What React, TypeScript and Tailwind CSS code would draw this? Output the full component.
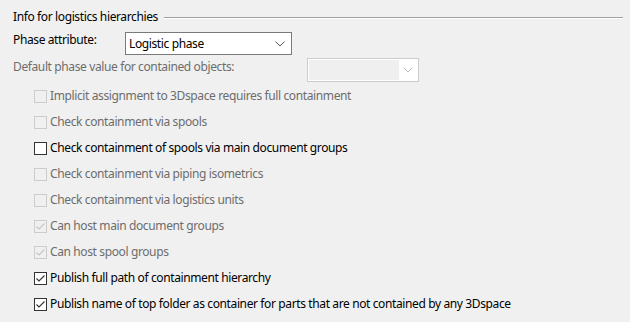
import React from 'react';

interface Option {
  label: string;
  checked: boolean;
  disabled: boolean;
}

const OPTIONS: Option[] = [
  { label: 'Implicit assignment to 3Dspace requires full containment', checked: false, disabled: true },
  { label: 'Check containment via spools', checked: false, disabled: true },
  { label: 'Check containment of spools via main document groups', checked: false, disabled: false },
  { label: 'Check containment via piping isometrics', checked: false, disabled: true },
  { label: 'Check containment via logistics units', checked: false, disabled: true },
  { label: 'Can host main document groups', checked: true, disabled: true },
  { label: 'Can host spool groups', checked: true, disabled: true },
  { label: 'Publish full path of containment hierarchy', checked: true, disabled: false },
  { label: 'Publish name of top folder as container for parts that are not contained by any 3Dspace', checked: true, disabled: false },
];

function Chevron({ color }: { color: string }) {
  return (
    <svg width="10" height="6" viewBox="0 0 10 6" fill="none">
      <path d="M0.5 0.5 L5 5 L9.5 0.5" stroke={color} strokeWidth="1" />
    </svg>
  );
}

function CheckRow({ option }: { option: Option }) {
  const { label, checked, disabled } = option;
  return (
    <div className="flex items-center h-[26px] pl-[34px]">
      <div
        className={`w-[13px] h-[13px] border flex items-center justify-center shrink-0 ${
          disabled ? 'border-[#cccccc] bg-[#f0f0f0]' : 'border-[#333333] bg-white'
        }`}
      >
        {checked && (
          <svg width="11" height="11" viewBox="0 0 11 11" fill="none">
            <path d="M1.5 5.5 L4 8 L9.5 2.5" stroke={disabled ? '#c6c6c6' : '#333333'} strokeWidth="1.1" />
          </svg>
        )}
      </div>
      <span className={`ml-[3px] leading-[16px] whitespace-nowrap ${disabled ? 'text-[#6d6d6d]' : 'text-black'}`}>
        {label}
      </span>
    </div>
  );
}

export default function App() {
  return (
    <div className="w-[630px] h-[322px] bg-[#f0f0f0] font-['Noto_Sans',sans-serif] text-[12px] tracking-[-0.38px] pt-[8px] overflow-hidden">
      {/* Group header */}
      <div className="flex items-center h-[18px] pl-[13px] pr-[7px]">
        <span className="leading-[16px] whitespace-nowrap">Info for logistics hierarchies</span>
        <div className="flex-1 ml-[6px] mt-[2px] border-t border-t-[#a0a0a0] border-b border-b-white" />
      </div>

      {/* Phase attribute */}
      <div className="flex items-start mt-[6px] pl-[13px]">
        <span className="w-[112px] leading-[16px]">Phase attribute:</span>
        <div className="w-[167px] h-[23px] border border-[#7a7a7a] bg-white flex items-center justify-between pl-[3px] pr-[6px]">
          <span className="leading-[16px]">Logistic phase</span>
          <Chevron color="#555555" />
        </div>
      </div>

      {/* Default phase value */}
      <div className="flex items-start mt-[3px] pl-[13px]">
        <span className="w-[294px] mt-[1px] leading-[16px] text-[#6d6d6d]">Default phase value for contained objects:</span>
        <div className="w-[112px] h-[24px] border border-[#cccccc] bg-white flex p-[1px]">
          <div className="flex-1 bg-[#efefef]" />
          <div className="w-[18px] flex items-center justify-center">
            <Chevron color="#bfbfbf" />
          </div>
        </div>
      </div>

      {/* Options */}
      <div className="flex flex-col mt-[1px]">
        {OPTIONS.map(opt => (
          <CheckRow key={opt.label} option={opt} />
        ))}
      </div>
    </div>
  );
}
